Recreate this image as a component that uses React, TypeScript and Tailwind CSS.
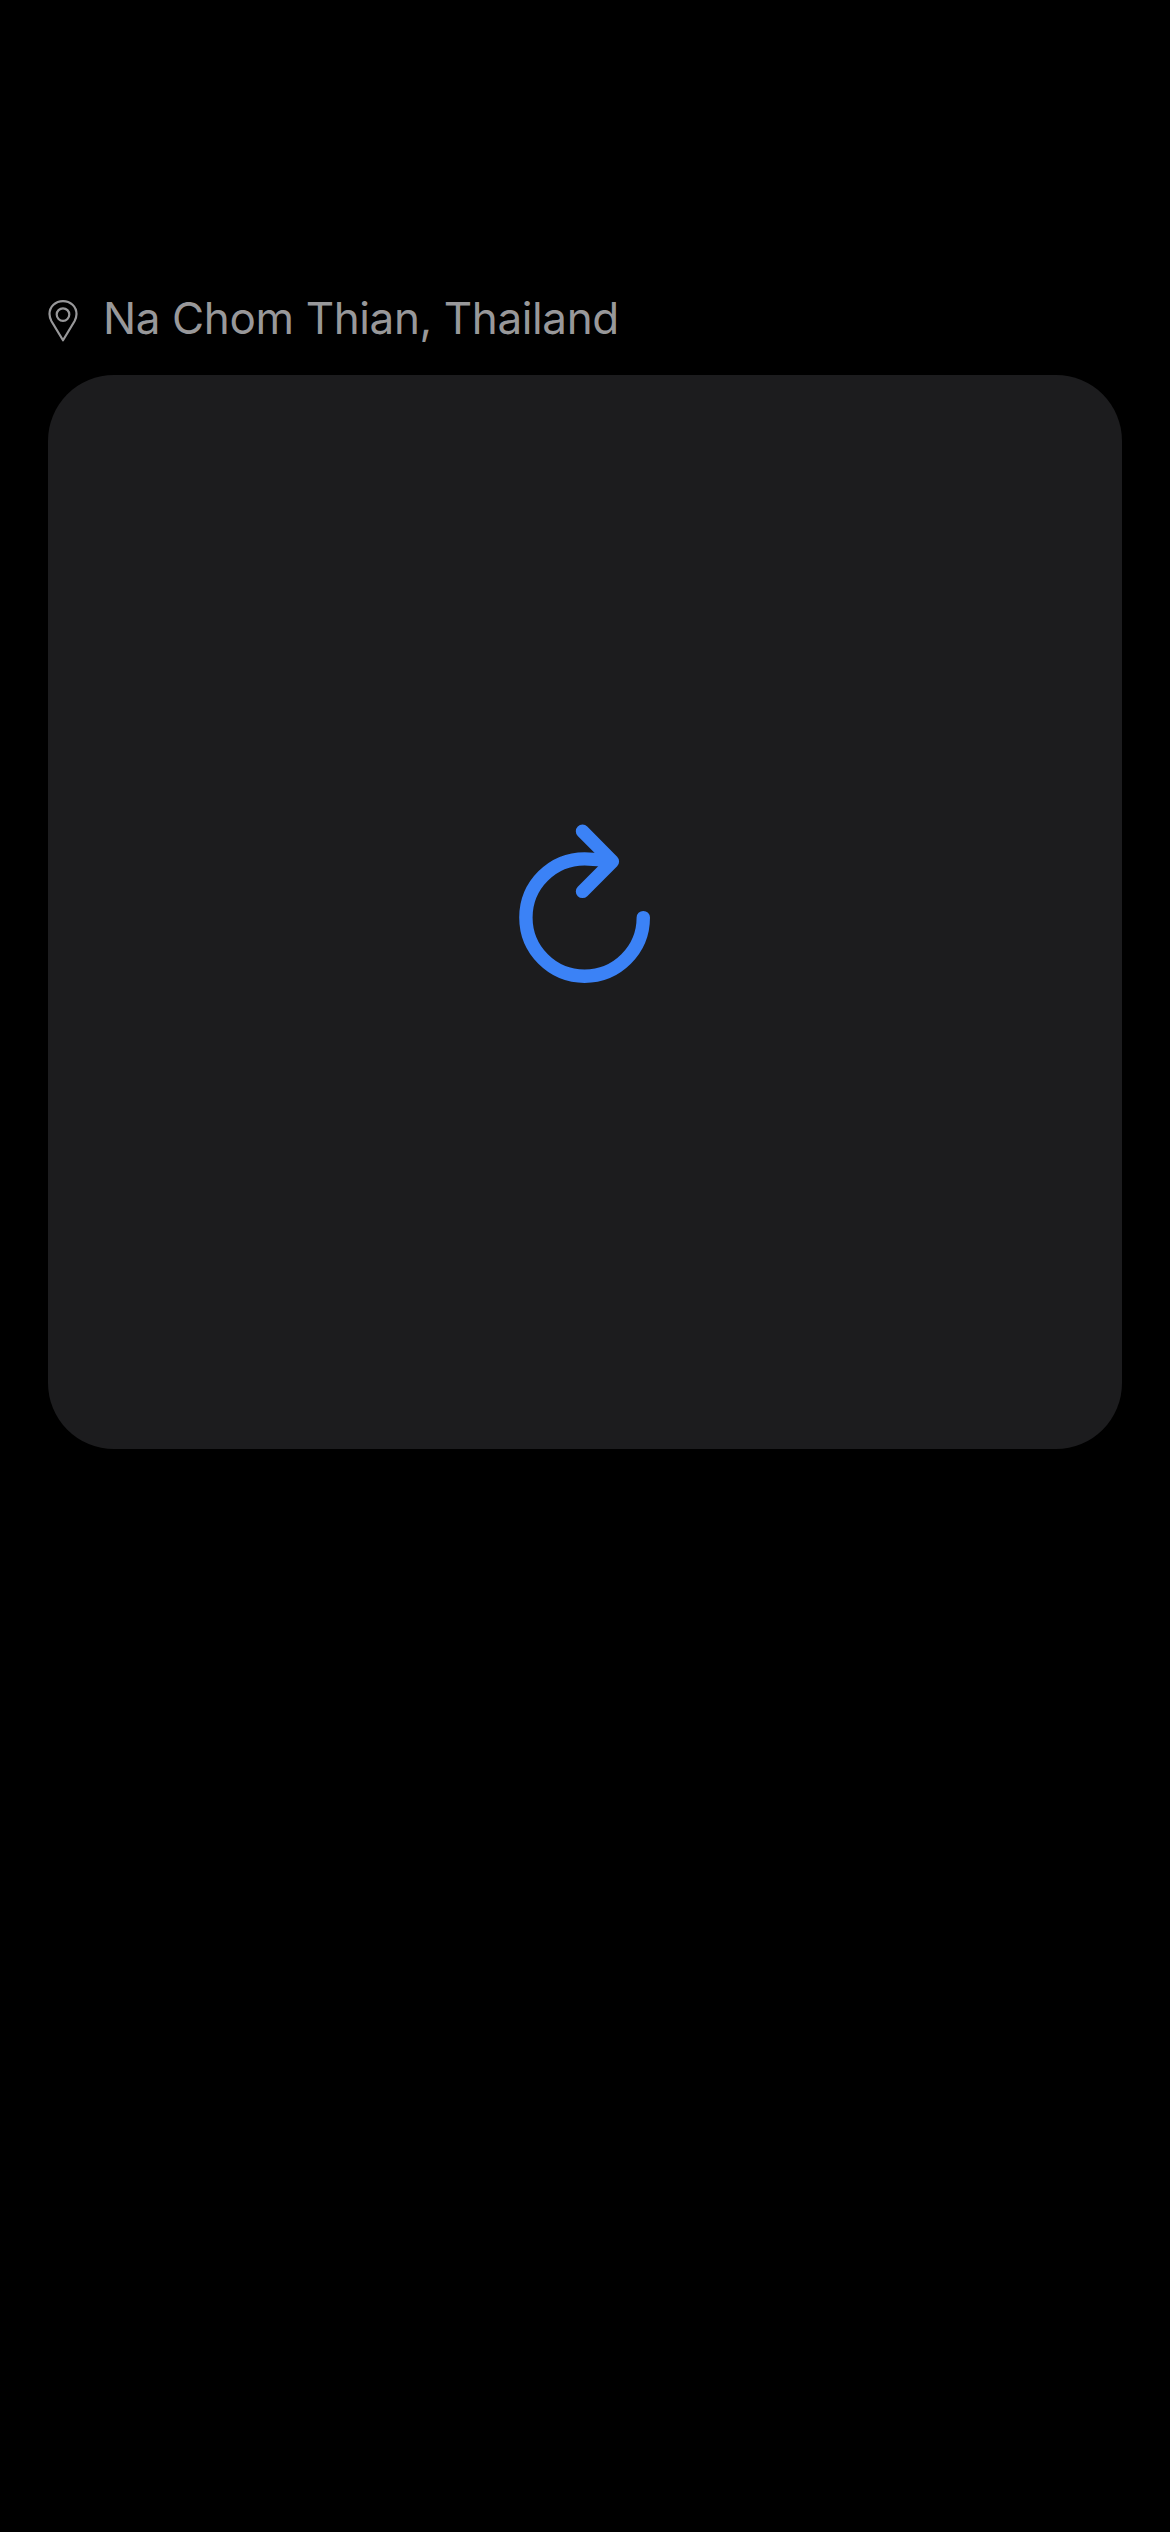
function PinIcon() {
  return (
    <svg width="30" height="44" viewBox="0 0 30 44" fill="none" stroke="#98989a" strokeWidth="2.2" className="shrink-0">
      <path d="M15 41.3L3.5 22.2C2.2 19.9 1.5 17.6 1.5 15.1C1.5 7.6 7.5 2.1 15 2.1S28.5 7.6 28.5 15.1C28.5 17.6 27.8 19.9 26.5 22.2Z" strokeLinejoin="round" />
      <circle cx="15" cy="15.6" r="6.3" />
    </svg>
  );
}

function RefreshIcon() {
  return (
    <svg width="132" height="160" viewBox="519 824 132 160" fill="none" stroke="#3b82f6" strokeWidth="13.4" strokeLinecap="round" strokeLinejoin="round">
      <path d="M643.3 917.6A58.7 58.7 0 1 1 584.6 858.9Q598 858.9 611 862" />
      <path d="M582.5 831.3L612.4 861.4L582.5 891.4" />
    </svg>
  );
}

export default function App() {
  return (
    <main className="min-h-[2532px] w-full bg-black px-12 pt-[284px] font-['Inter','Liberation_Sans',sans-serif]">
      <header className="flex h-[91px] items-start">
        <div className="flex h-[68px] items-center">
          <div className="pt-1.5">
            <PinIcon />
          </div>
          <span className="ml-[25px] whitespace-nowrap text-[44px] leading-[68px] tracking-[-0.38px] text-[#98989a]">Na Chom Thian, Thailand</span>
        </div>
      </header>
      <section className="flex h-[1074px] items-start justify-center rounded-[66px] bg-[#1c1c1e] pt-[449px]">
        <RefreshIcon />
      </section>
    </main>
  );
}
